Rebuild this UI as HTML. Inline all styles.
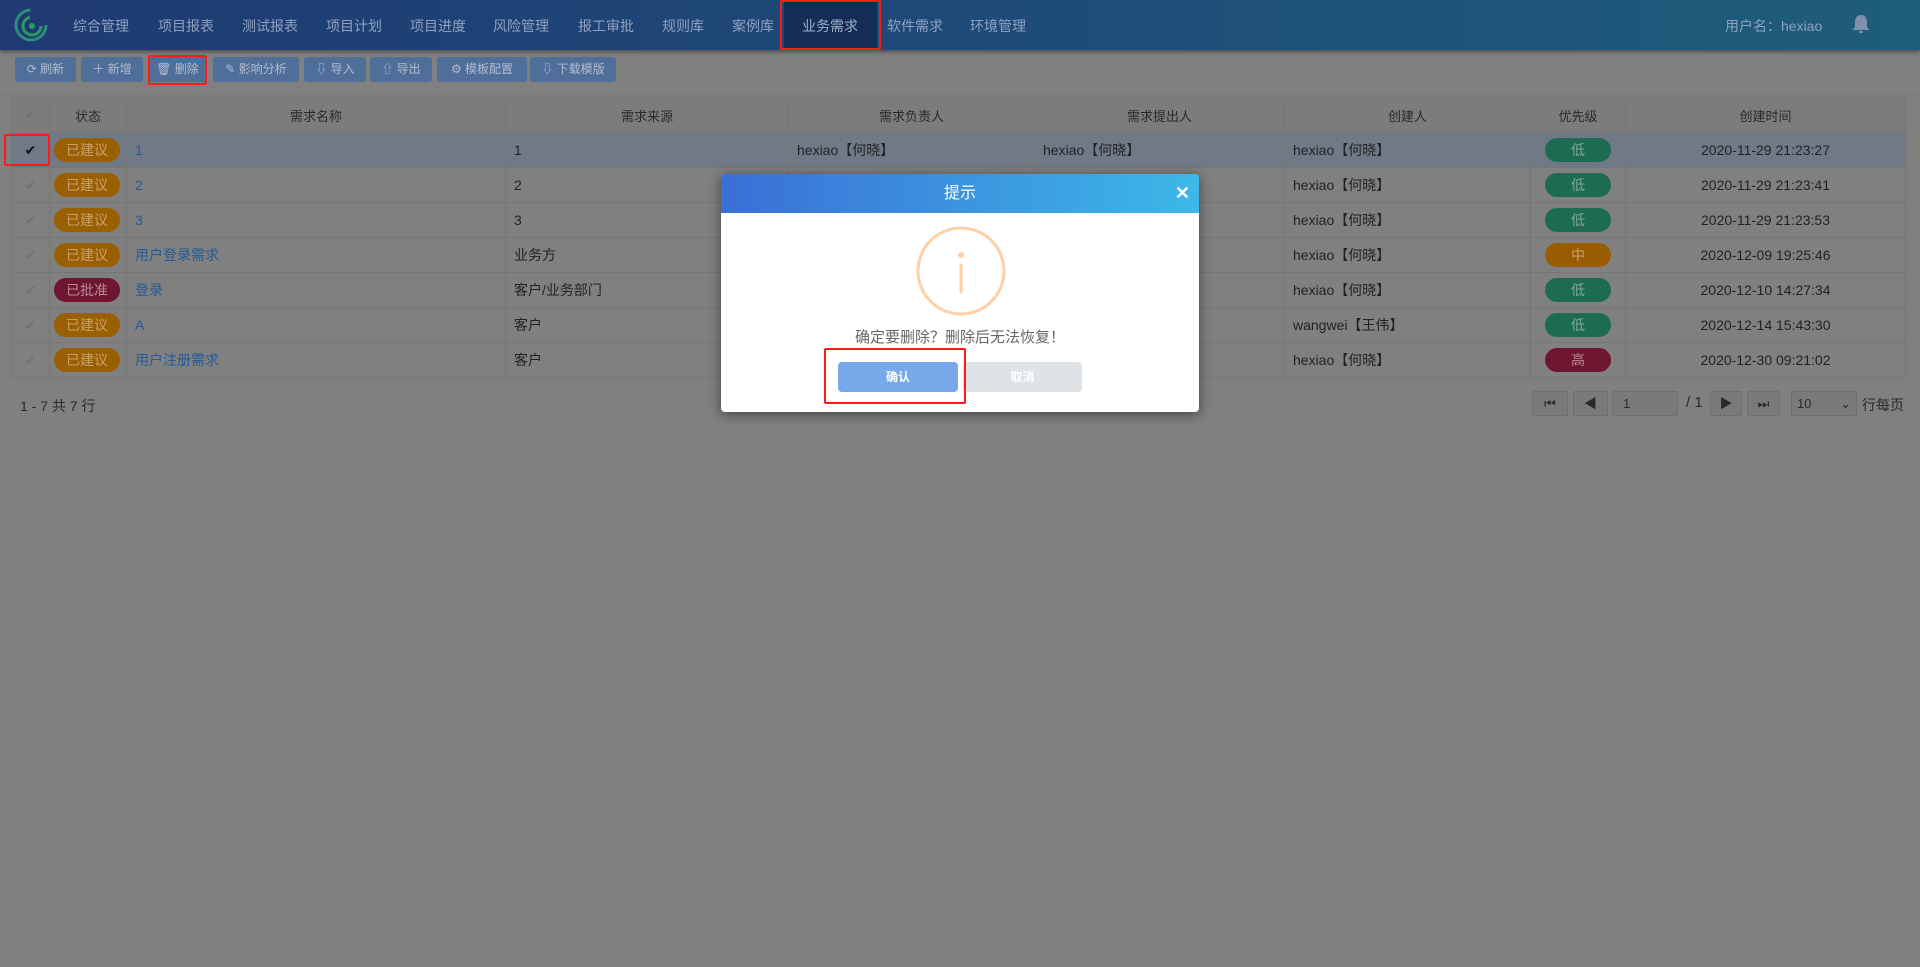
<!DOCTYPE html>
<html><head><meta charset="utf-8"><style>
*{box-sizing:border-box;margin:0;padding:0}
body{width:1920px;height:967px;overflow:hidden;background:#808080;font-family:"Liberation Sans","Noto Sans CJK SC",sans-serif;font-size:14px;color:#222;position:relative}
.nav{position:absolute;left:0;top:0;width:1920px;height:50px;background:linear-gradient(90deg,#1f3a72,#1e4a78 50%,#1e5e7a);box-shadow:0 2px 4px rgba(0,0,0,.4)}
.nav span{position:absolute;top:16px;color:#8fa1bf;font-size:14px}
.act{position:absolute;left:784px;top:0;width:93px;height:50px;background:#152c55}
.rb{position:absolute;border:2px solid #ff1a1a;border-radius:2px}
.tb{position:absolute;top:57px;height:25px;background:#506e9a;border-radius:3px;color:#b2bdd0;font-size:12px;line-height:25px;text-align:center}
.line{position:absolute;left:0;top:89px;width:1920px;height:1px;background:#868686}
table{position:absolute;left:11px;top:97px;border-collapse:collapse;table-layout:fixed}
td,th{height:35px;border:1px solid #767676;font-weight:normal;font-size:14px;color:#222;padding:0 8px;white-space:nowrap;overflow:hidden}
th{background:#7c7c7c;color:#2a2a2a;font-size:13px;text-align:center}
tr.sel td{background:#6f7a86}
.bd{display:inline-block;width:66px;height:24px;border-radius:12px;color:#c8a070;text-align:center;line-height:24px;font-size:14px;background:#9a5f00}
.bd.r{background:#6e1530;color:#b88a99}
.pr{display:inline-block;width:66px;height:24px;border-radius:12px;text-align:center;line-height:24px;background:#1d6b50;color:#7fa898}
.pr.m{background:#9a5c00;color:#c7a070}.pr.h{background:#6e1530;color:#b88a99}
a{color:#245a96;text-decoration:none}
.ck{color:#727272;text-align:center}
.pg{position:absolute;top:391px;height:25px;border:1px solid #6f6f6f;background:#7a7a7a;border-radius:2px;color:#2a2a2a;font-size:13px;line-height:23px;text-align:center}
.dlg{position:absolute;left:721px;top:174px;width:478px;height:238px;background:#fff;border-radius:4px;box-shadow:0 2px 12px rgba(0,0,0,.5);overflow:hidden}
.dh{height:39px;background:linear-gradient(90deg,#3a6fd6,#3db8e8);color:#fff;text-align:center;line-height:39px;font-size:16px;position:relative}
.dh b{position:absolute;right:9px;top:0;font-size:18px}
</style></head><body>
<div class="nav">
<svg style="position:absolute;left:13px;top:7px" width="36" height="36" viewBox="0 0 36 36"><circle cx="18" cy="18" r="15" fill="none" stroke="#2f8a7a" stroke-width="3" stroke-dasharray="70 30"/><circle cx="19" cy="19" r="9" fill="none" stroke="#2a9a60" stroke-width="3" stroke-dasharray="40 20"/><circle cx="19" cy="19" r="3" fill="#2a9a60"/></svg>
<div class="act"></div>
<span style="left:73px">综合管理</span><span style="left:158px">项目报表</span><span style="left:242px">测试报表</span><span style="left:326px">项目计划</span><span style="left:410px">项目进度</span><span style="left:493px">风险管理</span><span style="left:578px">报工审批</span><span style="left:662px">规则库</span><span style="left:732px">案例库</span><span style="left:802px;color:#9fb0c8">业务需求</span><span style="left:887px">软件需求</span><span style="left:970px">环境管理</span>
<span style="left:1725px">用户名：hexiao</span>
<svg style="position:absolute;left:1852px;top:14px" width="18" height="20" viewBox="0 0 18 20"><path d="M9 1c-4 0-6 3-6 7v5l-2 2v1h16v-1l-2-2V8c0-4-2-7-6-7z" fill="#7f90ae"/><rect x="7" y="17" width="4" height="2" rx="1" fill="#7f90ae"/></svg>
</div>
<div class="rb" style="left:780px;top:0;width:101px;height:50px"></div>
<div class="tb" style="left:15px;width:61px">⟳ 刷新</div>
<div class="tb" style="left:81px;width:62px">＋ 新增</div>
<div class="tb" style="left:148px;width:59px">🗑 删除</div>
<div class="tb" style="left:213px;width:86px">✎ 影响分析</div>
<div class="tb" style="left:304px;width:62px">⇩ 导入</div>
<div class="tb" style="left:370px;width:62px">⇧ 导出</div>
<div class="tb" style="left:437px;width:90px">⚙ 模板配置</div>
<div class="tb" style="left:530px;width:86px">⇩ 下载模版</div>
<div class="rb" style="left:148px;top:55px;width:59px;height:30px"></div>
<div class="line"></div>
<table>
<colgroup><col style="width:38px"><col style="width:77px"><col style="width:379px"><col style="width:283px"><col style="width:246px"><col style="width:250px"><col style="width:246px"><col style="width:95px"><col style="width:280px"></colgroup>
<tr><th class="ck">✔</th><th>状态</th><th>需求名称</th><th>需求来源</th><th>需求负责人</th><th>需求提出人</th><th>创建人</th><th>优先级</th><th>创建时间</th></tr>
<tr class="sel"><td class="ck" style="color:#111">✔</td><td style="padding:0 4px"><span class="bd">已建议</span></td><td><a>1</a></td><td>1</td><td>hexiao【何晓】</td><td>hexiao【何晓】</td><td>hexiao【何晓】</td><td style="text-align:center"><span class="pr">低</span></td><td style="text-align:center">2020-11-29 21:23:27</td></tr>
<tr><td class="ck">✔</td><td style="padding:0 4px"><span class="bd">已建议</span></td><td><a>2</a></td><td>2</td><td></td><td></td><td>hexiao【何晓】</td><td style="text-align:center"><span class="pr">低</span></td><td style="text-align:center">2020-11-29 21:23:41</td></tr>
<tr><td class="ck">✔</td><td style="padding:0 4px"><span class="bd">已建议</span></td><td><a>3</a></td><td>3</td><td></td><td></td><td>hexiao【何晓】</td><td style="text-align:center"><span class="pr">低</span></td><td style="text-align:center">2020-11-29 21:23:53</td></tr>
<tr><td class="ck">✔</td><td style="padding:0 4px"><span class="bd">已建议</span></td><td><a>用户登录需求</a></td><td>业务方</td><td></td><td></td><td>hexiao【何晓】</td><td style="text-align:center"><span class="pr m">中</span></td><td style="text-align:center">2020-12-09 19:25:46</td></tr>
<tr><td class="ck">✔</td><td style="padding:0 4px"><span class="bd r">已批准</span></td><td><a>登录</a></td><td>客户/业务部门</td><td></td><td></td><td>hexiao【何晓】</td><td style="text-align:center"><span class="pr">低</span></td><td style="text-align:center">2020-12-10 14:27:34</td></tr>
<tr><td class="ck">✔</td><td style="padding:0 4px"><span class="bd">已建议</span></td><td><a>A</a></td><td>客户</td><td></td><td></td><td>wangwei【王伟】</td><td style="text-align:center"><span class="pr">低</span></td><td style="text-align:center">2020-12-14 15:43:30</td></tr>
<tr><td class="ck">✔</td><td style="padding:0 4px"><span class="bd">已建议</span></td><td><a>用户注册需求</a></td><td>客户</td><td></td><td></td><td>hexiao【何晓】</td><td style="text-align:center"><span class="pr h">高</span></td><td style="text-align:center">2020-12-30 09:21:02</td></tr>
</table>
<div class="rb" style="left:4px;top:134px;width:46px;height:32px"></div>
<div style="position:absolute;left:20px;top:396px;font-size:14px;color:#2a2a2a">1 - 7 共 7 行</div>
<div class="pg" style="left:1532px;width:36px">⏮</div>
<div class="pg" style="left:1573px;width:35px">◀</div>
<div class="pg" style="left:1612px;width:66px;text-align:left;padding-left:10px">1</div>
<div style="position:absolute;left:1686px;top:394px;font-size:15px;color:#2a2a2a">/ 1</div>
<div class="pg" style="left:1710px;width:32px">▶</div>
<div class="pg" style="left:1747px;width:33px">⏭</div>
<div class="pg" style="left:1791px;width:66px;text-align:left;padding-left:5px">10 <span style="float:right;margin-right:5px">⌄</span></div>
<div style="position:absolute;left:1862px;top:395px;font-size:14px;color:#2a2a2a">行每页</div>
<div class="dlg">
<div class="dh">提示<b>✕</b></div>
<svg style="position:absolute;left:195px;top:52px" width="90" height="90" viewBox="0 0 90 90"><circle cx="45" cy="45" r="43" fill="none" stroke="#ffcfa5" stroke-width="3"/><circle cx="45" cy="29" r="3" fill="#ffcfa5"/><line x1="45" y1="39" x2="45" y2="66" stroke="#ffcfa5" stroke-width="3" stroke-linecap="round"/></svg>
<div style="position:absolute;left:0;width:478px;top:152px;text-align:center;font-size:15px;color:#666">确定要删除？删除后无法恢复！</div>
<div style="position:absolute;left:117px;top:188px;width:120px;height:30px;background:#78a8ea;border-radius:4px;color:#fff;font-size:12px;text-align:center;line-height:30px;font-weight:bold">确认</div>
<div style="position:absolute;left:242px;top:188px;width:119px;height:30px;background:#e0e3e5;border-radius:4px;color:#fff;font-size:12px;text-align:center;line-height:30px;font-weight:bold">取消</div>
</div>
<div class="rb" style="left:824px;top:348px;width:142px;height:56px"></div>
</body></html>
